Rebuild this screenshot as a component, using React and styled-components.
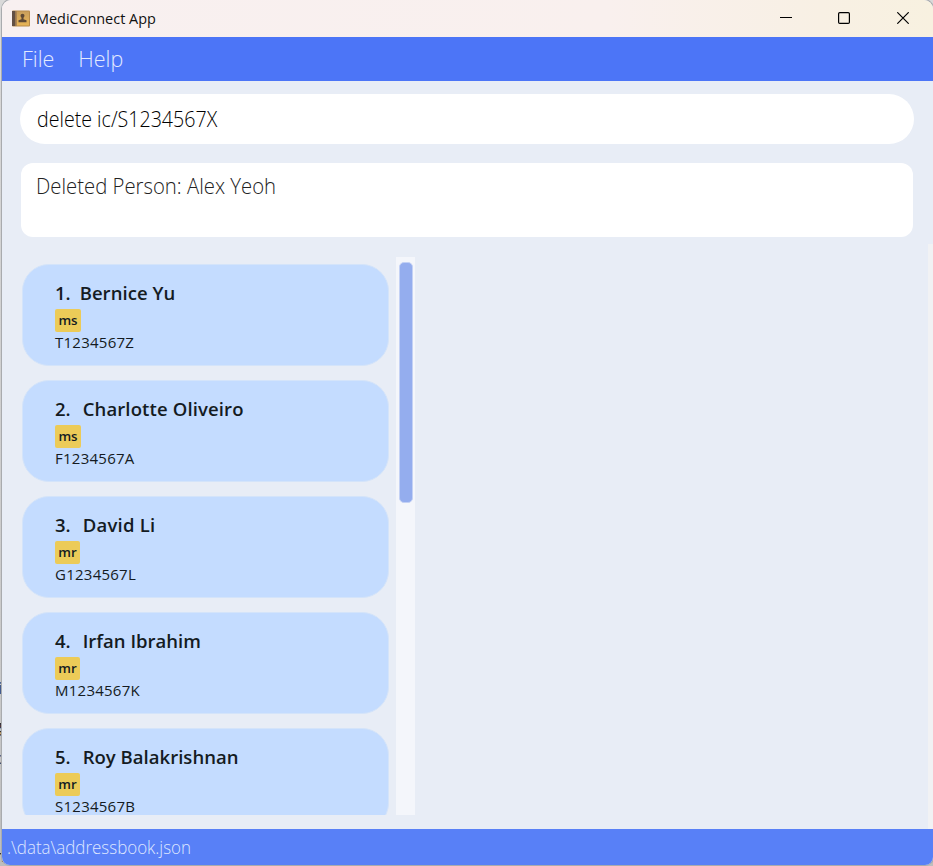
import React from "react";
import styled, { createGlobalStyle } from "styled-components";

const GlobalStyle = createGlobalStyle`
  * { box-sizing: border-box; }
  html, body { margin: 0; padding: 0; overflow: hidden; }
  body { background: #c6c6c6; font-family: "Open Sans", "Noto Sans", sans-serif; }
`;

const Desktop = styled.div`
  position: relative;
  width: 933px;
  height: 866px;
  padding-left: 2px;
  background: linear-gradient(#d9d9d9, #c9c9c9 80%, #bdbdbd);
  overflow: hidden;
`;

const BackdropText = styled.span`
  position: absolute;
  left: ${(p) => p.$left}px;
  top: ${(p) => p.$top}px;
  font-size: 16px;
  line-height: 20px;
  color: #35302c;
`;

const AppWindow = styled.main`
  position: relative;
  display: flex;
  flex-direction: column;
  width: 931px;
  height: 865px;
  background: #e8edf6;
  border-radius: 9px 9px 8px 8px;
  box-shadow: 0 0 0 1px #a9abae;
  overflow: hidden;
`;

const Label = styled.span`
  display: block;
  white-space: pre;
  font-size: ${(p) => p.$size}px;
  line-height: ${(p) => p.$line}px;
  font-weight: ${(p) => p.$weight || 400};
  letter-spacing: ${(p) => p.$spacing || 0}px;
  color: ${(p) => p.$color || "#141b22"};
  transform: ${(p) => (p.$condense ? `scaleX(${p.$condense})` : "none")};
  transform-origin: left center;
`;

const TitleBar = styled.header`
  display: flex;
  align-items: center;
  flex: 0 0 37px;
  padding-left: 10px;
  background: linear-gradient(90deg, #f8f0f0 0%, #f9f0ee 65%, #f8f0e4 88%, #f8f1e0 100%);
`;

const TitleText = styled.div`
  padding-bottom: 2px;
`;

const AppIcon = styled.svg`
  width: 18px;
  height: 17px;
  margin-right: 6px;
`;

const WindowControls = styled.div`
  display: flex;
  margin-left: auto;
  margin-right: 1px;
`;

const ControlButton = styled.button`
  display: flex;
  align-items: center;
  justify-content: center;
  width: 58.5px;
  height: 36px;
  padding: 0 0 1px;
  border: 0;
  background: transparent;
`;

const MenuBar = styled.nav`
  display: flex;
  flex: 0 0 44px;
  gap: 24px;
  padding: 6px 20px;
  background: #4c75f7;
`;

const CommandBox = styled.section`
  flex: 0 0 50px;
  width: 894px;
  margin: 13px 0 0 18px;
  padding: 8px 16.5px;
  border-radius: 25px;
  background: #fff;
`;

const ResultBox = styled.section`
  flex: 0 0 74px;
  width: 892px;
  margin: 19px 0 0 19px;
  padding: 6px 15px;
  border-radius: 12px;
  background: #fff;
`;

const Content = styled.section`
  display: flex;
  flex: 0 0 585px;
  margin-top: 7px;
`;

const PersonPanel = styled.div`
  display: flex;
  width: 413px;
  height: 558px;
  margin-top: 13px;
  overflow: hidden;
`;

const PersonList = styled.ul`
  display: flex;
  flex-direction: column;
  gap: 14px;
  width: 394px;
  margin: 0;
  padding: 7px 7px 0 20px;
  list-style: none;
`;

const PersonCard = styled.li`
  flex: 0 0 102px;
  padding: 14px 32px 0;
  border: 1px solid #d4e4fa;
  border-radius: 27px;
  background: #c4dcff;
`;

const NameRow = styled.div`
  display: flex;
  gap: ${(p) => p.$gap}px;
  height: 30px;
`;

const Tag = styled.span`
  display: flex;
  justify-content: center;
  width: ${(p) => p.$width}px;
  height: 23px;
  border-radius: 2px;
  background: #eccb58;
`;

const ScrollTrack = styled.div`
  width: 19px;
  padding: 5px 2px 0 3px;
  background: #f4f6fb;
`;

const ScrollThumb = styled.div`
  height: 241px;
  border: 1px solid #c3d1f5;
  border-radius: 5px;
  background: #94adee;
`;

const DetailPanel = styled.div`
  flex: 1;
  border-right: 5px solid #f1f2f4;
`;

const StatusBar = styled.footer`
  flex: 1;
  padding: 4px 5px;
  background: #5880f7;
`;

const people = [
  { name: "Bernice Yu", tag: "ms", ic: "T1234567Z", gap: 9, spacing: 0.05 },
  { name: "Charlotte Oliveiro", tag: "ms", ic: "F1234567A", gap: 12, spacing: 0.13 },
  { name: "David Li", tag: "mr", ic: "G1234567L", gap: 12, spacing: 0.25 },
  { name: "Irfan Ibrahim", tag: "mr", ic: "M1234567K", gap: 12, spacing: 0.02 },
  { name: "Roy Balakrishnan", tag: "mr", ic: "S1234567B", gap: 12, spacing: 0.03 },
];

function AddressBookIcon() {
  return (
    <AppIcon viewBox="0 0 18 17">
      <defs>
        <linearGradient id="cover" x2="0" y2="1">
          <stop stopColor="#c99f5c" />
          <stop offset="1" stopColor="#e8b455" />
        </linearGradient>
      </defs>
      <rect x="0" y="0.5" width="18" height="16" rx="1" fill="#b88a48" />
      <rect x="4" y="1.5" width="13" height="14" fill="url(#cover)" />
      <path d="M0 1h3.5v15H0z" fill="#625044" />
      <path d="M3.5 1H5v15H3.5z" fill="#aa8454" />
      <circle cx="10.5" cy="5.7" r="2" fill="#5f4935" />
      <path d="M9.5 6h2v3.2l3 1v2H6.5v-2l3-1z" fill="#5f4935" />
    </AppIcon>
  );
}

function Person({ index, person }) {
  return (
    <PersonCard>
      <NameRow $gap={person.gap}>
        <Label $size={18.5} $line={27} $weight={600}>{index}.</Label>
        <Label $size={18.5} $line={27} $weight={600} $spacing={person.spacing}>{person.name}</Label>
      </NameRow>
      <Tag $width={person.tag === "ms" ? 26 : 25}>
        <Label $size={13.3} $line={22} $weight={600}>{person.tag}</Label>
      </Tag>
      <Label $size={15} $line={21} $spacing={0.25}>{person.ic}</Label>
    </PersonCard>
  );
}

export default function App() {
  return (
    <Desktop>
      <GlobalStyle />
      <BackdropText $left={-2} $top={678}>i</BackdropText>
      <BackdropText $left={-6} $top={716}>g</BackdropText>
      <BackdropText $left={-6} $top={748}>c</BackdropText>
      <BackdropText $left={-5} $top={846}>n</BackdropText>
      <AppWindow>
        <TitleBar>
          <AddressBookIcon />
          <TitleText>
            <Label $size={14.6} $line={20} $color="#111" $condense={0.99}>MediConnect App</Label>
          </TitleText>
          <WindowControls>
            <ControlButton aria-label="Minimize">
              <svg width="12" height="12"><path d="M0 5.5h12" stroke="#000" /></svg>
            </ControlButton>
            <ControlButton aria-label="Maximize">
              <svg width="12" height="12"><rect x="0.6" y="0.6" width="10.8" height="10.8" rx="1.2" fill="none" stroke="#000" strokeWidth="1.2" /></svg>
            </ControlButton>
            <ControlButton aria-label="Close">
              <svg width="12" height="12"><path d="M0.3 0.3l11.4 11.4M11.7 0.3L0.3 11.7" stroke="#000" strokeWidth="1.2" /></svg>
            </ControlButton>
          </WindowControls>
        </TitleBar>
        <MenuBar>
          <Label $size={21.5} $line={32} $weight={300} $color="#e3eaff">File</Label>
          <Label $size={21.5} $line={32} $weight={300} $color="#e3eaff">Help</Label>
        </MenuBar>
        <CommandBox>
          <Label $size={22} $line={32} $weight={300} $color="#000" $condense={0.892}>delete ic/S1234567X</Label>
        </CommandBox>
        <ResultBox>
          <Label $size={22} $line={32} $weight={300} $color="#222" $condense={0.923}>Deleted Person: Alex Yeoh</Label>
        </ResultBox>
        <Content>
          <PersonPanel>
            <PersonList>
              {people.map((person, i) => (
                <Person key={person.ic} index={i + 1} person={person} />
              ))}
            </PersonList>
            <ScrollTrack><ScrollThumb /></ScrollTrack>
          </PersonPanel>
          <DetailPanel />
        </Content>
        <StatusBar>
          <Label $size={18.5} $line={27} $weight={300} $color="#dfe7ff" $condense={0.916}>.\data\addressbook.json</Label>
        </StatusBar>
      </AppWindow>
    </Desktop>
  );
}
